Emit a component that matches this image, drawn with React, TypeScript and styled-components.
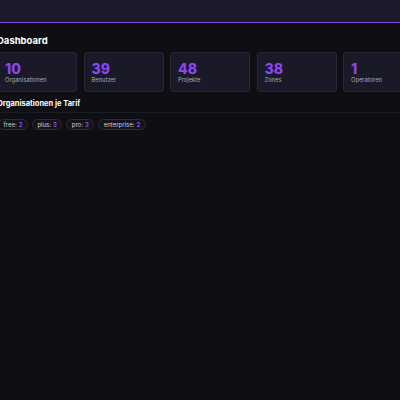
import styled, { createGlobalStyle } from "styled-components";

const GlobalStyle = createGlobalStyle`
  html, body {
    margin: 0;
    padding: 0;
    background: #0e0e13;
    font-family: Inter, "Noto Sans", sans-serif;
    color: #ffffff;
  }
`;

const Page = styled.div`
  width: 400px;
  height: 400px;
  overflow: hidden;
  background: #0e0e13;
`;

const TopBar = styled.header`
  height: 22px;
  background: #1c1b2e;
  border-bottom: 1px solid #7c4ddb;
`;

const Main = styled.main`
  margin-left: -3px;
  padding-top: 12px;
`;

const Title = styled.h1`
  margin: 0;
  font-size: 9.5px;
  font-weight: 700;
  line-height: 12px;
`;

const StatGrid = styled.div`
  display: grid;
  grid-template-columns: repeat(5, 80px);
  gap: 6.5px;
  margin-top: 5px;
`;

const StatCard = styled.div`
  height: 40px;
  box-sizing: border-box;
  background: #191928;
  border: 1px solid #262637;
  border-radius: 3px;
  padding: 8px 7px 0;
`;

const StatValue = styled.div`
  font-size: 14px;
  font-weight: 800;
  line-height: 15px;
  color: #8b46f0;
`;

const StatLabel = styled.div`
  font-size: 5.8px;
  line-height: 7px;
  color: #a8a8bc;
`;

const SectionTitle = styled.h2`
  margin: 7px 0 0;
  padding-bottom: 3px;
  font-size: 7.5px;
  font-weight: 700;
  line-height: 10px;
  border-bottom: 1px solid #1c1c26;
`;

const PillRow = styled.div`
  display: flex;
  gap: 4px;
  margin-top: 6px;
  margin-left: 1px;
`;

const Pill = styled.span`
  display: inline-flex;
  align-items: center;
  height: 9px;
  padding: 0 4.5px;
  border: 1px solid #2c2c3c;
  border-radius: 6px;
  background: #13131c;
  font-size: 6px;
  color: #d0d0dc;
`;

const PillCount = styled.span`
  margin-left: 2px;
  color: #8b5cf6;
  font-weight: 600;
`;

const stats = [
  { value: 10, label: "Organisationen" },
  { value: 39, label: "Benutzer" },
  { value: 48, label: "Projekte" },
  { value: 38, label: "Zones" },
  { value: 1, label: "Operatoren" },
];

const tariffs = [
  { name: "free", count: 2 },
  { name: "plus", count: 3 },
  { name: "pro", count: 3 },
  { name: "enterprise", count: 2 },
];

export default function App() {
  return (
    <Page>
      <GlobalStyle />
      <TopBar />
      <Main>
        <Title>Dashboard</Title>
        <StatGrid>
          {stats.map((s) => (
            <StatCard key={s.label}>
              <StatValue>{s.value}</StatValue>
              <StatLabel>{s.label}</StatLabel>
            </StatCard>
          ))}
        </StatGrid>
        <SectionTitle>Organisationen je Tarif</SectionTitle>
        <PillRow>
          {tariffs.map((t) => (
            <Pill key={t.name}>
              {t.name}:<PillCount>{t.count}</PillCount>
            </Pill>
          ))}
        </PillRow>
      </Main>
    </Page>
  );
}
